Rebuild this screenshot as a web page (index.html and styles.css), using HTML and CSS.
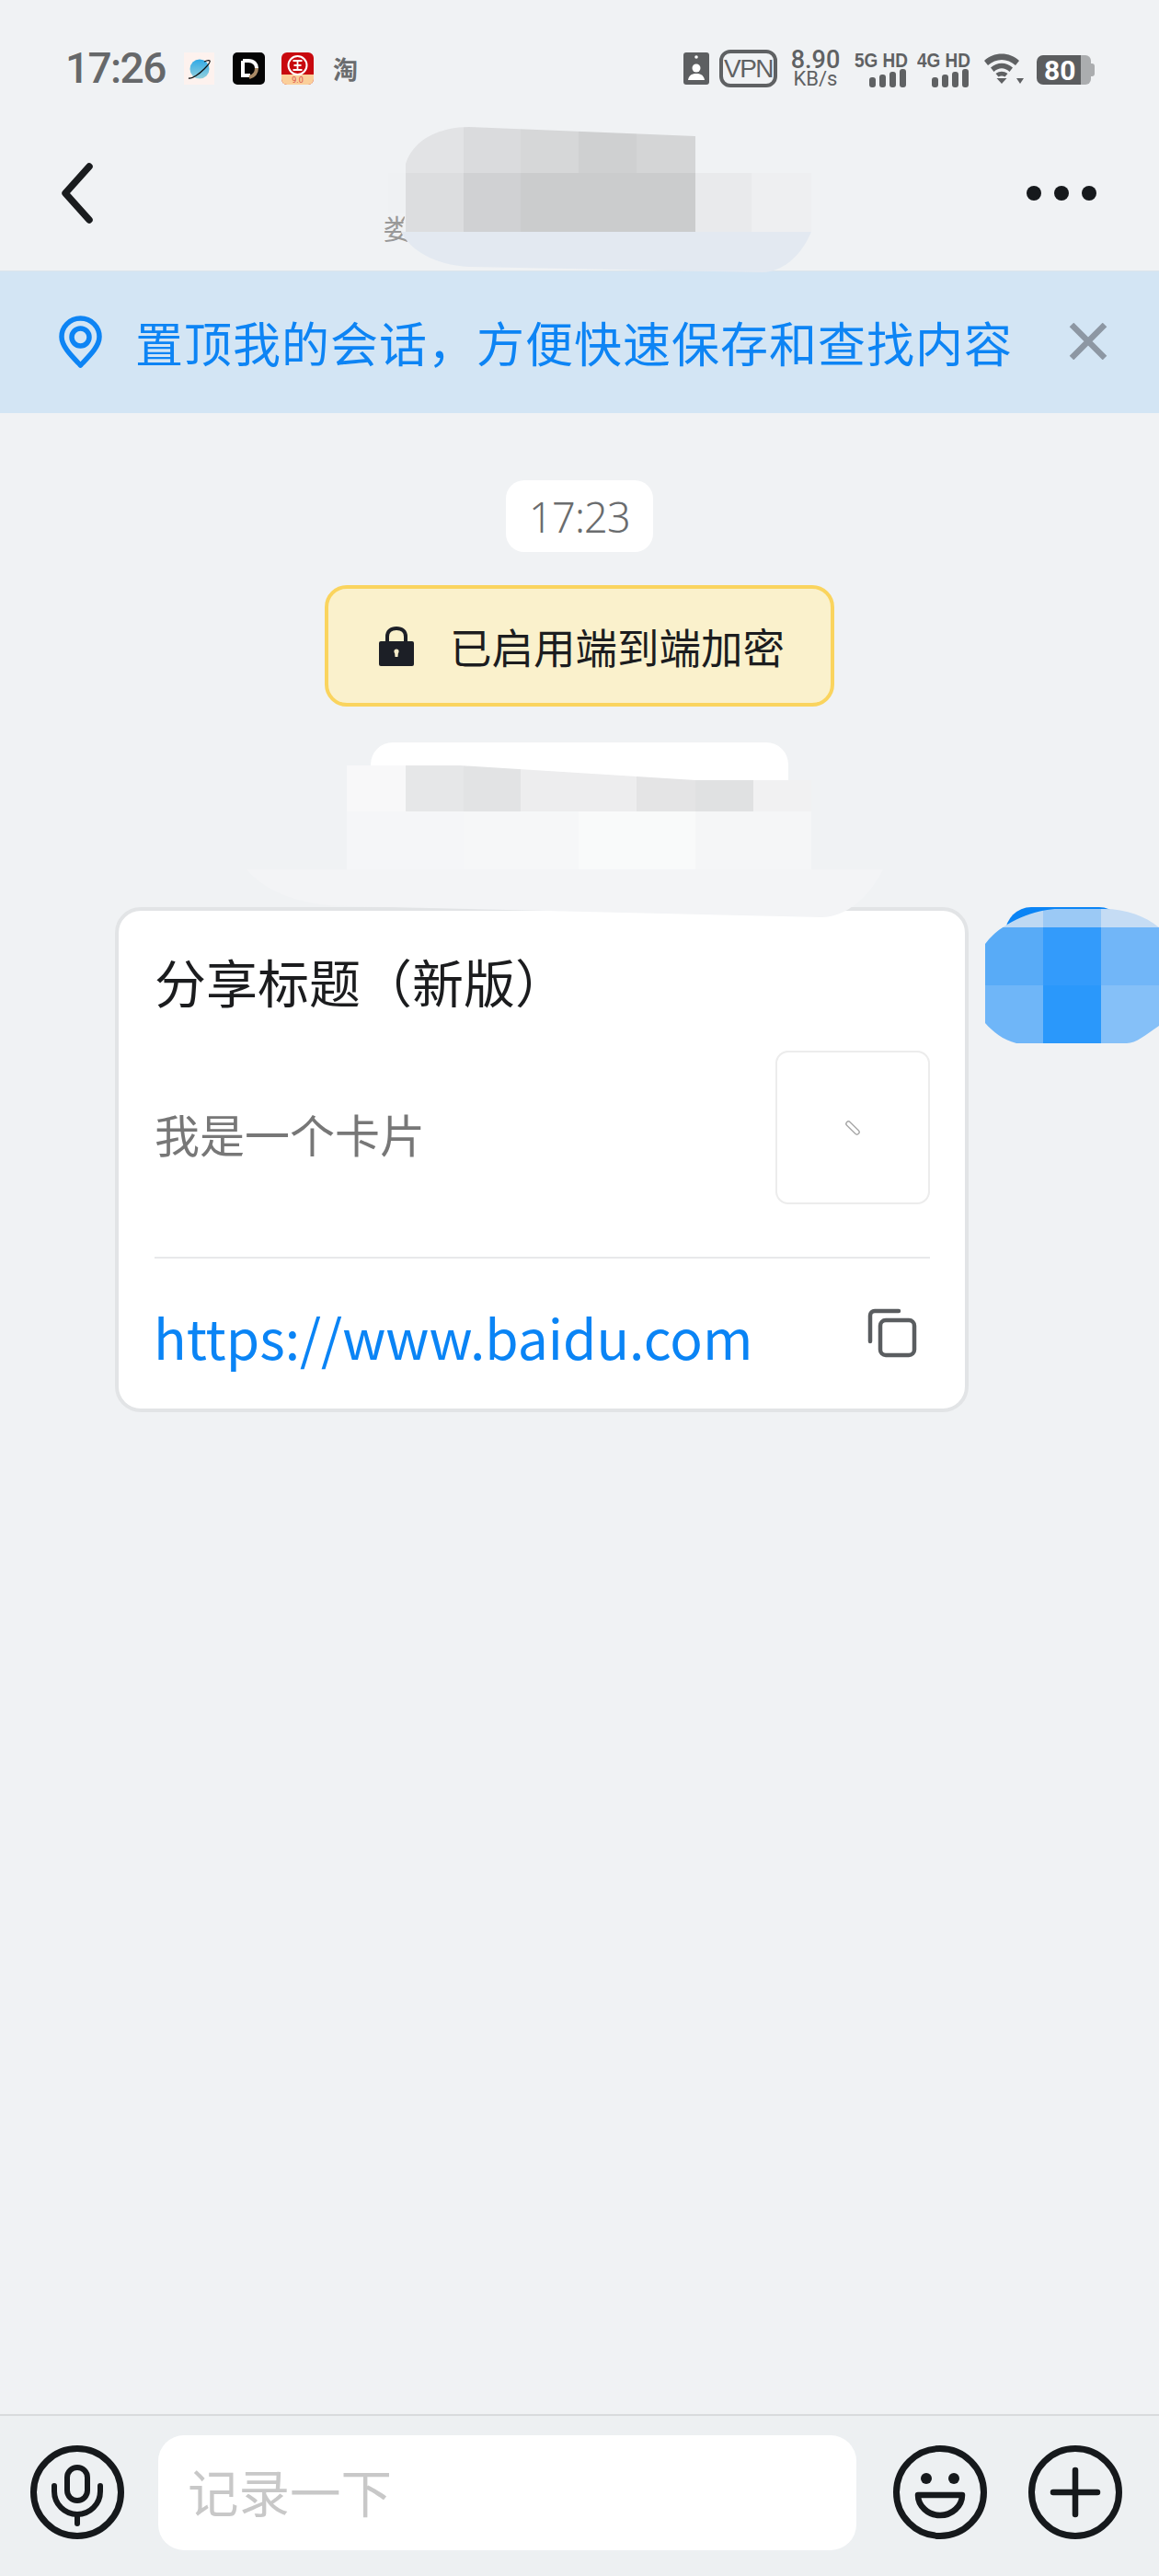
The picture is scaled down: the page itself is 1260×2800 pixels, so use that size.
FILE: index.html
```html
<!DOCTYPE html>
<html lang="zh-CN">
<head>
    <meta charset="UTF-8">
    <meta name="viewport" content="width=device-width, initial-scale=1.0">
    <title>会话</title>
    <link rel="stylesheet" href="styles.css">
</head>
<body>
    <div class="page">
        <!-- status bar -->
        <div class="status-bar">
            <div class="status-left">
                <span class="clock">17:26</span>
                <svg class="app-icon" viewBox="0 0 35 35">
                    <defs>
                        <linearGradient id="planet" x1="0" y1="0" x2="0" y2="1">
                            <stop offset="0" stop-color="#2fa9e6"></stop>
                            <stop offset="1" stop-color="#93d0dc"></stop>
                        </linearGradient>
                    </defs>
                    <rect width="33" height="35" fill="#fdf2ee"></rect>
                    <circle cx="17" cy="18" r="10.5" fill="url(#planet)"></circle>
                    <path d="M5 28 C9 29 17 23 22 18 C26 14 29 10 28 9 C27 8 24 9 22 10" fill="none" stroke="#111" stroke-width="1.3"></path>
                </svg>
                <svg class="app-icon" viewBox="0 0 35 35">
                    <rect width="35" height="35" rx="5" fill="#050505"></rect>
                    <path d="M11 9 H17 C23 9 26 13 26 17" fill="none" stroke="#fff" stroke-width="4"></path>
                    <path d="M11 9 V25 H19" fill="none" stroke="#fff" stroke-width="4"></path>
                    <path d="M26 17 C26 22 23 26 18 27" fill="none" stroke="#a98a66" stroke-width="4"></path>
                </svg>
                <svg class="app-icon" viewBox="0 0 35 35">
                    <rect width="35" height="35" rx="6" fill="#c8090f"></rect>
                    <path d="M0 24 H35 V29 A6 6 0 0 1 29 35 H6 A6 6 0 0 1 0 29Z" fill="#fbcf9a"></path>
                    <circle cx="17.5" cy="14" r="10" fill="none" stroke="#fff" stroke-width="2"></circle>
                    <path d="M12.5 9 H22.5 M12.5 19 H22.5 M17.5 9 V19 M13.5 14 H21.5" stroke="#fff" stroke-width="1.8"></path>
                    <text x="17.5" y="33" class="bank-label">9.0</text>
                </svg>
                <span class="tao">淘</span>
            </div>
            <div class="status-right">
                <svg class="id-icon" viewBox="0 0 28 35">
                    <rect width="28" height="35" rx="3" fill="#5d5f61"></rect>
                    <circle cx="14" cy="5" r="1.8" fill="#fff"></circle>
                    <circle cx="14" cy="17" r="4.5" fill="#fff"></circle>
                    <path d="M5 30 C6 24 10 23 14 23 C18 23 22 24 23 30Z" fill="#fff"></path>
                </svg>
                <span class="vpn">VPN</span>
                <div class="speed">
                    <span class="speed-num">8.90</span>
                    <span class="speed-unit">KB/s</span>
                </div>
                <div class="signal">
                    <span class="signal-label">5G HD</span>
                    <div class="signal-bars"><i class="b1"></i><i class="b2"></i><i class="b3"></i><i class="b4"></i></div>
                </div>
                <div class="signal">
                    <span class="signal-label">4G HD</span>
                    <div class="signal-bars"><i class="b1"></i><i class="b2"></i><i class="b3"></i><i class="b4"></i></div>
                </div>
                <svg class="wifi-icon" viewBox="0 0 43 33">
                    <path d="M0 8 C10 -2 28 -2 38 8 L34 13 C25 5 13 5 4 13Z" fill="#5f6163"></path>
                    <path d="M7 15.5 C14 9 24 9 31 15.5 L27.5 20 C22 15 16 15 10.5 20Z" fill="#5f6163"></path>
                    <path d="M12.5 22 C17 19 21 19 25.5 22 L22.5 25.5 C20 24 18 24 15.5 25.5Z" fill="#5f6163"></path>
                    <path d="M13.5 27 H24.5 L19 33Z" fill="#5f6163"></path>
                    <path d="M35 27 H43 L39 33Z" fill="#5f6163"></path>
                </svg>
                <div class="battery">
                    <span class="battery-level">80</span>
                    <span class="battery-rest"></span>
                    <span class="battery-nub"></span>
                </div>
            </div>
        </div>

        <!-- header -->
        <div class="chat-header">
            <svg class="back-icon" viewBox="0 0 36 66">
                <path d="M31 4 L5 33 L31 62" fill="none" stroke="#1a1c1e" stroke-width="7.5" stroke-linecap="round" stroke-linejoin="round"></path>
            </svg>
            <div class="chat-title">娄</div>
            <div class="more-dots"><span></span><span></span><span></span></div>
        </div>

        <!-- pin tip -->
        <div class="pin-banner">
            <svg class="pin-icon" viewBox="0 0 47 57">
                <path d="M23.5 3 C11.5 3 3 12.5 3 23 C3 34 15 45 23.5 54 C32 45 44 34 44 23 C44 12.5 35.5 3 23.5 3Z" fill="none" stroke="#0d84f4" stroke-width="5.5" stroke-linejoin="round"></path>
                <circle cx="23.5" cy="23.5" r="9.5" fill="none" stroke="#0d84f4" stroke-width="5.5"></circle>
            </svg>
            <span class="pin-text">置顶我的会话，方便快速保存和查找内容</span>
            <svg class="close-icon" viewBox="0 0 42 40">
                <path d="M3 2 L39 38 M39 2 L3 38" stroke="#8d97a3" stroke-width="6.5"></path>
            </svg>
        </div>

        <!-- messages -->
        <div class="chat-body">
            <div class="time-pill">17:23</div>
            <div class="encrypt-note">
                <svg class="lock-icon" viewBox="0 0 38 43">
                    <path d="M9 19 V11 C9 5 13 2 19 2 C25 2 29 5 29 11 V19" fill="none" stroke="#1c1f26" stroke-width="4"></path>
                    <rect y="16" width="38" height="27" rx="2" fill="#1c1f26"></rect>
                    <path d="M17 27 H21 L20.5 33 H17.5Z" fill="#f5ecca"></path>
                    <circle cx="19" cy="27" r="2.6" fill="#f5ecca"></circle>
                </svg>
                <span>已启用端到端加密</span>
            </div>
            <div class="system-note"></div>

            <div class="message-row">
                <div class="share-card">
                    <div class="card-title">分享标题（新版）</div>
                    <div class="card-main">
                        <div class="card-desc">我是一个卡片</div>
                        <div class="card-thumb">
                            <svg class="clip-icon" viewBox="0 0 16 16">
                                <rect x="-1" y="5.5" width="18" height="5" rx="2.5" transform="rotate(45 8 8)" fill="none" stroke="#a8a8a8" stroke-width="1.4"></rect>
                            </svg>
                        </div>
                    </div>
                    <div class="card-link">
                        <span class="card-url">https://www.baidu.com</span>
                        <svg class="copy-icon" viewBox="0 0 54 54">
                            <path d="M3 36 V8 A5 5 0 0 1 8 3 H34" fill="none" stroke="#5a5d60" stroke-width="4.5" stroke-linecap="round"></path>
                            <rect x="14" y="13" width="37" height="38" rx="6" fill="none" stroke="#5a5d60" stroke-width="4.5"></rect>
                        </svg>
                    </div>
                </div>
                <div class="own-bubble"></div>
            </div>
        </div>

        <!-- input bar -->
        <div class="input-bar">
            <svg class="round-icon" viewBox="0 0 102 102">
                <circle cx="51" cy="51" r="47.5" fill="none" stroke="#16191c" stroke-width="7"></circle>
                <rect x="40" y="24" width="22" height="36" rx="11" fill="none" stroke="#16191c" stroke-width="6"></rect>
                <path d="M26 44 V50 A25 25 0 0 0 76 50 V44 M51 75 V85" fill="none" stroke="#16191c" stroke-width="6" stroke-linecap="round"></path>
            </svg>
            <div class="input-box">记录一下</div>
            <svg class="round-icon emoji-icon" viewBox="0 0 102 102">
                <circle cx="51" cy="51" r="47.5" fill="none" stroke="#16191c" stroke-width="7"></circle>
                <circle cx="36" cy="36" r="6" fill="#16191c"></circle>
                <circle cx="66" cy="36" r="6" fill="#16191c"></circle>
                <path d="M27 54 H75 C75 66 64 76 51 76 C38 76 27 66 27 54Z" fill="none" stroke="#16191c" stroke-width="6.5" stroke-linejoin="round"></path>
            </svg>
            <svg class="round-icon plus-icon" viewBox="0 0 102 102">
                <circle cx="51" cy="51" r="47.5" fill="none" stroke="#16191c" stroke-width="7"></circle>
                <path d="M27 51 H75 M51 27 V75" stroke="#16191c" stroke-width="6.5" stroke-linecap="round"></path>
            </svg>
        </div>

        <!-- mosaic patches laid over the screenshot -->
        <svg class="mosaic-layer" viewBox="0 0 1260 2800">
            <defs>
                <clipPath id="titleClip">
                    <path d="M441 178 C450 150 480 138 510 138 L756 148 V188 H882 V252 C870 280 850 295 830 296 L510 290 C470 288 445 270 436 252 L441 232 H422 V188 H441Z"></path>
                </clipPath>
                <clipPath id="noteClip">
                    <path d="M377 832 H500 L756 848 L882 848 V945 H960 C945 975 920 997 893 997 L380 985 C320 985 285 965 268 945 H377Z"></path>
                </clipPath>
                <clipPath id="avatarClip">
                    <path d="M1071 1026 C1090 1000 1130 988 1150 988 H1200 C1225 988 1245 996 1260 1008 V1115 C1245 1125 1235 1134 1225 1134 H1105 C1090 1130 1080 1122 1071 1112Z"></path>
                </clipPath>
            </defs>
            <g clip-path="url(#titleClip)">
                <rect x="422" y="188" width="19" height="64" fill="#eff1f3"></rect>
                <rect x="441" y="138" width="63" height="50" fill="#e2e3e5"></rect>
                <rect x="504" y="138" width="62" height="50" fill="#dadbdd"></rect>
                <rect x="566" y="138" width="63" height="50" fill="#d6d7d8"></rect>
                <rect x="629" y="138" width="63" height="50" fill="#cfd0d1"></rect>
                <rect x="692" y="138" width="64" height="50" fill="#d4d5d6"></rect>
                <rect x="441" y="188" width="63" height="64" fill="#dcdddf"></rect>
                <rect x="504" y="188" width="62" height="64" fill="#d0d1d3"></rect>
                <rect x="566" y="188" width="190" height="64" fill="#cbcccd"></rect>
                <rect x="756" y="188" width="61" height="64" fill="#e9eaec"></rect>
                <rect x="817" y="188" width="65" height="64" fill="#eeeff1"></rect>
                <rect x="430" y="252" width="452" height="46" fill="#e3e9f1"></rect>
            </g>
            <g clip-path="url(#noteClip)">
                <rect x="377" y="832" width="64" height="50" fill="#f8f8f9"></rect>
                <rect x="441" y="832" width="63" height="50" fill="#e6e7e8"></rect>
                <rect x="504" y="832" width="62" height="50" fill="#e2e3e4"></rect>
                <rect x="566" y="832" width="126" height="50" fill="#ededee"></rect>
                <rect x="692" y="832" width="64" height="50" fill="#e4e4e5"></rect>
                <rect x="756" y="832" width="63" height="50" fill="#e0e1e2"></rect>
                <rect x="819" y="832" width="63" height="50" fill="#f1f1f2"></rect>
                <rect x="377" y="882" width="127" height="63" fill="#f5f6f8"></rect>
                <rect x="504" y="882" width="125" height="63" fill="#f6f7f8"></rect>
                <rect x="629" y="882" width="127" height="63" fill="#f9fafa"></rect>
                <rect x="756" y="882" width="126" height="63" fill="#f5f6f7"></rect>
                <rect x="268" y="945" width="692" height="52" fill="#f3f4f6"></rect>
            </g>
            <g clip-path="url(#avatarClip)">
                <rect x="1071" y="988" width="63" height="20" fill="#bed9f3"></rect>
                <rect x="1134" y="988" width="63" height="20" fill="#9bc9f5"></rect>
                <rect x="1197" y="988" width="63" height="20" fill="#c5dcf4"></rect>
                <rect x="1071" y="1008" width="63" height="63" fill="#58abf7"></rect>
                <rect x="1134" y="1008" width="63" height="63" fill="#339bfb"></rect>
                <rect x="1197" y="1008" width="63" height="63" fill="#71b6f8"></rect>
                <rect x="1071" y="1071" width="63" height="63" fill="#6fb6f8"></rect>
                <rect x="1134" y="1071" width="63" height="63" fill="#2a98fb"></rect>
                <rect x="1197" y="1071" width="63" height="63" fill="#85c0f8"></rect>
            </g>
        </svg>
    </div>
</body>
</html>
```

FILE: styles.css
```css
* {
    margin: 0;
    padding: 0;
    box-sizing: border-box;
    font-family: "Noto Sans CJK SC", "Noto Sans", sans-serif;
}

body {
    background-color: #f0f2f4;
}

.page {
    position: relative;
    width: 1260px;
    height: 2800px;
    display: flex;
    flex-direction: column;
    overflow: hidden;
}

.status-bar {
    height: 130px;
    padding: 54px 70px 0 71px;
    display: flex;
    justify-content: space-between;
    align-items: flex-start;
    color: #5f6163;
}

.status-left,
.status-right {
    display: flex;
    align-items: center;
    height: 41px;
}

.clock {
    width: 129px;
    font-family: Roboto, sans-serif;
    font-size: 46px;
    font-weight: 500;
    letter-spacing: -1.6px;
    line-height: 41px;
    color: #66686a;
}

.app-icon {
    width: 35px;
    height: 35px;
    margin-right: 18px;
}

.bank-label {
    font-family: Roboto, sans-serif;
    font-size: 9px;
    text-anchor: middle;
    fill: #d9534a;
}

.tao {
    margin-left: 3px;
    font-size: 27px;
    font-weight: 700;
    line-height: 41px;
    color: #6a6c6e;
}

.id-icon {
    width: 28px;
    height: 35px;
    margin-right: 11px;
}

.vpn {
    width: 63px;
    height: 41px;
    margin-right: 15px;
    border: 4px solid #5f6163;
    border-radius: 12px;
    font-family: "Liberation Sans", sans-serif;
    font-size: 28px;
    letter-spacing: -1.5px;
    line-height: 33px;
    text-align: center;
    white-space: nowrap;
}

.speed {
    width: 53px;
    margin-right: 16px;
    display: flex;
    flex-direction: column;
    align-items: center;
    font-family: Roboto, sans-serif;
}

.speed-num {
    font-family: Roboto, sans-serif;
    font-size: 27px;
    font-weight: 500;
    line-height: 22px;
}

.speed-unit {
    font-family: Roboto, sans-serif;
    font-size: 22px;
    line-height: 20px;
}

.signal {
    width: 57px;
    margin-right: 11px;
    display: flex;
    flex-direction: column;
    align-items: flex-end;
}

.signal-label {
    width: 57px;
    font-family: "Liberation Sans", sans-serif;
    font-size: 19px;
    font-weight: 700;
    line-height: 20px;
    white-space: nowrap;
    transform: scaleY(1.15);
    transform-origin: top;
}

.signal-bars {
    display: flex;
    align-items: flex-end;
    gap: 4px;
    height: 20px;
    margin-right: 1px;
}

.signal-bars i {
    display: block;
    width: 7px;
    background-color: #5f6163;
    border-radius: 3px;
}

.b1 { height: 11px; }
.b2 { height: 14px; }
.b3 { height: 17px; }
.b4 { height: 20px; }

.wifi-icon {
    width: 43px;
    height: 33px;
    margin: 0 14px 0 5px;
}

.battery {
    display: flex;
    align-items: center;
    height: 32px;
    margin-top: 3px;
}

.battery-level {
    width: 48px;
    height: 32px;
    padding-left: 8px;
    background-color: #5b5d5f;
    border-radius: 7px 0 0 7px;
    color: #fff;
    font-family: Roboto, sans-serif;
    font-size: 30px;
    font-weight: 700;
    line-height: 33px;
}

.battery-rest {
    width: 11px;
    height: 32px;
    background-color: #abadaf;
    border-radius: 0 6px 6px 0;
}

.battery-nub {
    width: 4px;
    height: 14px;
    background-color: #abadaf;
    border-radius: 0 3px 3px 0;
}

.chat-header {
    height: 164px;
    padding: 0 68px 4px 66px;
    display: flex;
    justify-content: space-between;
    align-items: center;
}

.back-icon {
    width: 36px;
    height: 66px;
}

.chat-title {
    width: 465px;
    margin: 74px 0 0 80px;
    font-size: 30px;
    line-height: 34px;
    color: #999;
}

.more-dots {
    display: flex;
    gap: 14px;
}

.more-dots span {
    width: 16px;
    height: 16px;
    background-color: #16191c;
    border-radius: 50%;
}

.pin-banner {
    height: 155px;
    padding: 0 56px 0 64px;
    display: flex;
    align-items: center;
    background-color: #d3e5f4;
    border-top: 1px solid #dce5ec;
}

.pin-icon {
    width: 47px;
    height: 57px;
    margin-right: 36px;
    margin-top: -1px;
}

.pin-text {
    flex: 1;
    font-size: 52px;
    letter-spacing: 1px;
    line-height: 60px;
    color: #0d84f4;
    white-space: nowrap;
}

.close-icon {
    width: 42px;
    height: 40px;
    margin-top: -2px;
}

.chat-body {
    flex: 1;
    padding-top: 73px;
    display: flex;
    flex-direction: column;
    align-items: center;
}

.time-pill {
    width: 160px;
    height: 78px;
    background-color: #fff;
    border-radius: 20px;
    font-family: "Noto Sans", sans-serif;
    font-size: 45px;
    font-weight: 300;
    letter-spacing: -0.8px;
    line-height: 80px;
    text-align: center;
    color: #6a6c6e;
}

.encrypt-note {
    width: 554px;
    height: 132px;
    margin-top: 36px;
    padding-left: 55px;
    display: flex;
    align-items: center;
    background-color: #faf1cc;
    border: 4px solid #fad45e;
    border-radius: 24px;
    font-size: 45.5px;
    color: #1c1d1f;
    white-space: nowrap;
}

.lock-icon {
    width: 38px;
    height: 43px;
    margin-right: 39px;
}

.system-note {
    width: 454px;
    height: 78px;
    margin-top: 39px;
    background-color: #fff;
    border-radius: 24px;
}

.message-row {
    width: 100%;
    margin-top: 101px;
    padding-left: 125px;
    display: flex;
    align-items: flex-start;
}

.share-card {
    width: 928px;
    height: 549px;
    padding: 40px 38px 0 39px;
    background-color: #fff;
    border: 4px solid #e2e4e6;
    border-radius: 28px;
}

.card-title {
    font-size: 56px;
    line-height: 72px;
    color: #1b1c1e;
    white-space: nowrap;
}

.card-main {
    height: 266px;
    padding-top: 40px;
    display: flex;
    justify-content: space-between;
    align-items: flex-start;
    border-bottom: 2px solid #e8e9ea;
}

.card-desc {
    margin-top: 60px;
    font-size: 49px;
    line-height: 60px;
    color: #777;
}

.card-thumb {
    width: 168px;
    height: 167px;
    display: flex;
    align-items: center;
    justify-content: center;
    border: 2px solid #ececec;
    border-radius: 14px;
}

.clip-icon {
    width: 16px;
    height: 16px;
}

.card-link {
    height: 162px;
    padding: 8px 14px 0 0;
    display: flex;
    justify-content: space-between;
    align-items: center;
}

.card-url {
    margin-left: -1px;
    font-size: 58.8px;
    line-height: 80px;
    color: #0a84f5;
}

.copy-icon {
    width: 54px;
    height: 54px;
    margin-top: -8px;
}

.own-bubble {
    width: 130px;
    height: 60px;
    margin-left: 40px;
    background-color: #0a84f5;
    border-radius: 28px;
}

.input-bar {
    height: 176px;
    padding: 21px 40px 29px 33px;
    display: flex;
    align-items: center;
    background-color: #edf0f2;
    border-top: 2px solid #d9dbdd;
}

.round-icon {
    width: 102px;
    height: 102px;
    flex-shrink: 0;
}

.input-box {
    width: 759px;
    height: 125px;
    margin-left: 37px;
    padding-left: 32px;
    background-color: #fff;
    border-radius: 28px;
    font-size: 55.5px;
    line-height: 120px;
    color: #c8c8c8;
}

.emoji-icon {
    margin-left: 40px;
}

.plus-icon {
    margin-left: 45px;
}

.mosaic-layer {
    position: absolute;
    top: 0;
    left: 0;
    width: 1260px;
    height: 2800px;
    pointer-events: none;
}
```
